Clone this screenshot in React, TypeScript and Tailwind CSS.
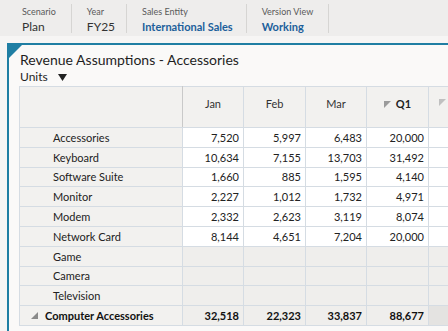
import React from "react";

const rows: { label: string; vals: string[] | null; bold?: boolean }[] = [
  { label: "Accessories", vals: ["7,520", "5,997", "6,483", "20,000"] },
  { label: "Keyboard", vals: ["10,634", "7,155", "13,703", "31,492"] },
  { label: "Software Suite", vals: ["1,660", "885", "1,595", "4,140"] },
  { label: "Monitor", vals: ["2,227", "1,012", "1,732", "4,971"] },
  { label: "Modem", vals: ["2,332", "2,623", "3,119", "8,074"] },
  { label: "Network Card", vals: ["8,144", "4,651", "7,204", "20,000"] },
  { label: "Game", vals: null },
  { label: "Camera", vals: null },
  { label: "Television", vals: null },
];

const colW = ["w-[61px]", "w-[62px]", "w-[61px]", "w-[62px]"];

function Section({ label, value, blue, pr }: { label: string; value: string; blue?: boolean; pr: string }) {
  return (
    <div className={`flex flex-col h-[29px] border-r border-[#d6d5d3] pl-[15px] ${pr}`}>
      <div className="text-[9px] leading-[11px] text-[#5a5a5a] mt-[2px]">{label}</div>
      <div className={`leading-[15px] mt-[2px] ${blue ? "text-[11px] font-bold text-[#1c5f9b]" : "text-[12px] text-[#333]"}`}>{value}</div>
    </div>
  );
}

export default function App() {
  return (
    <div className="w-[448px] h-[331px] overflow-hidden bg-[#f6f5f4] text-[#222]" style={{ fontFamily: "Lato, 'Noto Sans', sans-serif" }}>
      <div className="h-[36px] bg-[#eeedec] flex items-start pt-[4px] pl-[7px]">
        <Section label="Scenario" value="Plan" pr="pr-[15px]" />
        <Section label="Year" value="FY25" pr="pr-[11px]" />
        <Section label="Sales Entity" value="International Sales" blue pr="pr-[13px]" />
        <Section label="Version View" value="Working" blue pr="pr-[15px]" />
      </div>
      <div className="relative mt-[7px] ml-[7px] h-[300px] overflow-hidden bg-[#faf9f8] border-l-2 border-t-2 border-[#1f7ea3] pl-[10px] pt-[6px]">
        <div className="absolute left-0 top-0 w-[13px] h-[13px] bg-[#1f7ea3]" style={{ clipPath: "polygon(0 0,100% 0,0 100%)" }} />
        <div className="text-[14px] leading-[18px] text-[#1e1e1e] pl-[1px]">Revenue Assumptions - Accessories</div>
        <div className="flex items-center text-[12px] leading-[14px] text-[#1e1e1e] pl-[1px] mt-[1px]">
          <span>Units</span>
          <svg width="9" height="7" viewBox="0 0 9 7" className="ml-[10px] mt-[1px]"><path d="M0 0H9L4.5 7Z" fill="#222" /></svg>
        </div>
        <table className="mt-[2px] border-collapse text-[11px] table-fixed w-[440px]">
          <tbody>
            <tr className="h-[41px] bg-[#f2f1ef]">
              <td className="w-[163px] border border-[#d5dce3] border-r-[#c9c9c9]" />
              {["Jan", "Feb", "Mar"].map((m, i) => (
                <td key={m} className={`${colW[i]} border border-[#d5dce3] text-center align-top pt-[9px] text-[#333]`}>{m}</td>
              ))}
              <td className={`${colW[3]} border border-[#d5dce3] align-top pt-[9px]`}>
                <div className="flex items-center justify-center gap-[5px]">
                  <svg width="7" height="7" viewBox="0 0 7 7"><path d="M0 0H7L0 7Z" fill="#9b9b9b" /></svg>
                  <span className="font-bold text-[#222]">Q1</span>
                </div>
              </td>
              <td className="w-[31px] border border-[#d5dce3] align-top pt-[12px] pl-[10px]">
                <svg width="7" height="7" viewBox="0 0 7 7"><path d="M0 0H7L0 7Z" fill="#c0c0c0" /></svg>
              </td>
            </tr>
            {rows.map((r) => (
              <tr key={r.label} className="h-[19.8px]">
                <td className="border border-[#d5dce3] bg-[#f2f1ef] pl-[33px] text-[#222] leading-[17px]">{r.label}</td>
                {[0, 1, 2, 3].map((i) => (
                  <td key={i} className={`border border-[#d5dce3] text-right pr-[4px] leading-[17px] text-[#222] ${r.vals ? "bg-white" : "bg-[#efeeec]"}`}>
                    {r.vals ? r.vals[i] : ""}
                  </td>
                ))}
                <td className={`border border-[#d5dce3] ${r.vals ? "bg-white" : "bg-[#efeeec]"}`} />
              </tr>
            ))}
            <tr className="h-[19.8px] bg-[#f2f1ef]">
              <td className="border border-[#d5dce3] font-bold leading-[17px] text-[#111]">
                <div className="flex items-center pl-[11px]">
                  <svg width="7" height="7" viewBox="0 0 7 7" className="mr-[7px]"><path d="M7 0V7H0Z" fill="#8a8a8a" /></svg>
                  <span>Computer Accessories</span>
                </div>
              </td>
              {["32,518", "22,323", "33,837", "88,677"].map((v) => (
                <td key={v} className="border border-[#d5dce3] text-right pr-[4px] font-bold leading-[17px] text-[#111] bg-[#efeeec]">{v}</td>
              ))}
              <td className="border border-[#d5dce3] bg-[#e4e3e1]" />
            </tr>
          </tbody>
        </table>
      </div>
    </div>
  );
}
